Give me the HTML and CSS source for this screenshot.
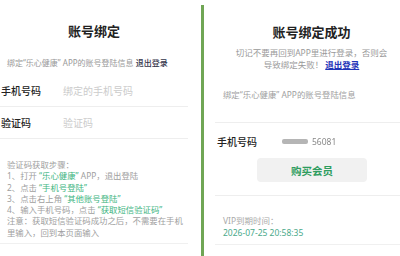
FILE: index.html
```html
<!DOCTYPE html>
<html lang="zh-CN">
<head>
<meta charset="utf-8">
<link rel="stylesheet" href="styles.css">
</head>
<body>
<div class="page">
  <section class="left">
    <h1 class="title">账号绑定</h1>
    <p class="sub">绑定“乐心健康” APP的账号登陆信息 <span class="logout">退出登录</span></p>
    <div class="row r1"><span class="label">手机号码</span><span class="ph">绑定的手机号码</span></div>
    <div class="row r2"><span class="label">验证码</span><span class="ph">验证码</span></div>
    <div class="steps">
      <p>验证码获取步骤：</p>
      <p>1、打开 <span class="g">“乐心健康”</span> APP，退出登陆</p>
      <p>2、点击 <span class="g">“手机号登陆”</span></p>
      <p>3、点击右上角 <span class="g">“其他账号登陆”</span></p>
      <p>4、输入手机号码，点击 <span class="g">“获取短信验证码”</span></p>
      <p>注意：获取短信验证码成功之后，不需要在手机</p>
      <p>里输入，回到本页面输入</p>
    </div>
  </section>
  <div class="vline"></div>
  <section class="right">
    <h1 class="title rt">账号绑定成功</h1>
    <p class="warn">切记不要再回到APP里进行登录，否则会<br>导致绑定失败！<span class="link">退出登录</span></p>
    <p class="info">绑定“乐心健康” APP的账号登陆信息</p>
    <div class="phone"><span class="plabel">手机号码</span><span class="num"><span class="mask"></span>56081</span></div>
    <div class="btnwrap"><div class="btn">购买会员</div></div>
    <div class="vip">
      <p class="vlabel">VIP到期时间：</p>
      <p class="vdate">2026-07-25 20:58:35</p>
    </div>
  </section>
</div>
</body>
</html>
```
FILE: styles.css
```css
* { box-sizing: border-box; margin: 0; padding: 0; }
html, body { background: #fff; }
body {
  width: 400px; height: 256px; overflow: hidden;
  font-family: "Noto Sans", "Noto Sans CJK SC", sans-serif;
  color: #999;
}
.page { display: flex; height: 256px; }
.left { width: 201px; padding-right: 13px; }
.vline { width: 3px; background: #70a655; margin-top: 5px; }
.right { flex: 1; padding-left: 11px; }

.title {
  font-size: 13px; line-height: 18px; font-weight: 700; color: #222;
  text-align: center; margin-top: 22px;
}
.sub {
  font-size: 8px; line-height: 12px; margin-top: 17px; padding-left: 7px;
  color: #999; white-space: nowrap;
}
.logout { color: #33334a; font-weight: 500; }

.row {
  display: flex; align-items: center; border-bottom: 1px solid #eee;
}
.r1 { height: 38px; padding-top: 5px; }
.r2 { height: 32px; }
.label { width: 63px; font-size: 10px; font-weight: 500; color: #222; padding-left: 1px; }
.ph { font-size: 10px; color: #ccc; }

.steps {
  padding: 20px 0 5px 7px; border-bottom: 1px solid #f0f0f0;
  font-size: 8.4px; line-height: 11.3px; color: #a0a0a0; white-space: nowrap;
}
.g { color: #3eb581; }

.rt { margin-left: 8px; margin-top: 23px; }
.warn {
  margin-left: 8px; margin-top: 6px; text-align: center;
  font-size: 8.5px; line-height: 12px; color: #999;
}
.link { color: #1f34b8; font-weight: 600; text-decoration: underline; margin-left: 2px; }
.info {
  padding: 18px 0 21px 8px; font-size: 8.4px; line-height: 12px; color: #a0a0a0;
  border-bottom: 1px solid #eee; white-space: nowrap;
}
.phone { display: flex; align-items: center; margin-top: 11px; height: 14px; padding-left: 2px; }
.plabel { width: 65px; font-size: 10px; font-weight: 500; color: #222; }
.num { display: flex; align-items: center; font-size: 8.5px; color: #888; filter: blur(0.5px); }
.mask { display: inline-block; width: 26px; height: 5px; background: #b5b5b5; margin-right: 4px; border-radius: 2px; }
.btnwrap { padding: 10px 0 13px 42px; border-bottom: 1px solid #eee; }
.btn {
  width: 110px; height: 24px; border-radius: 4px; background: #f1f1f1;
  display: flex; align-items: center; justify-content: center;
  font-size: 10.5px; font-weight: 700; color: #2f9d5f;
}
.vip { padding: 19px 0 5px 8px; border-bottom: 1px solid #f0f0f0; font-size: 8.5px; line-height: 12px; }
.vlabel { color: #aaa; }
.vdate { color: #4aa98a; }
```
